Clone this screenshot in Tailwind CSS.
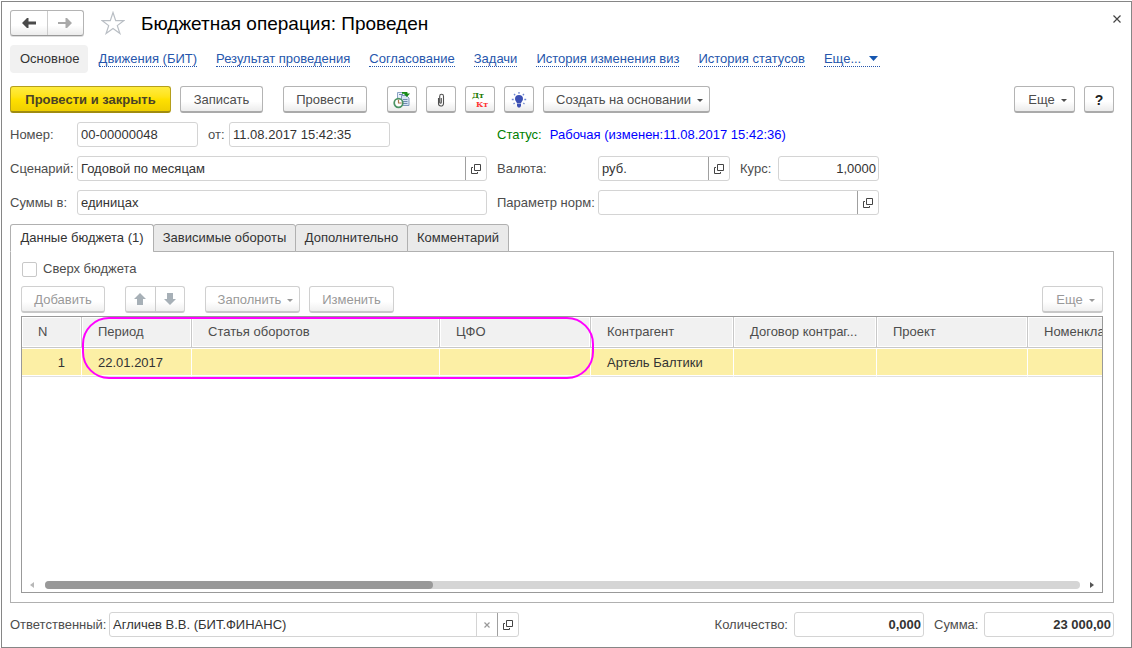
<!DOCTYPE html>
<html lang="ru">
<head>
<meta charset="utf-8">
<title>Бюджетная операция: Проведен</title>
<script src="https://cdn.jsdelivr.net/npm/@tailwindcss/browser@4"></script>
</head>
<body class="h-screen min-h-[480px] overflow-hidden bg-white pt-px pl-px font-['Liberation_Sans',Arial,sans-serif] text-[13px] leading-4 text-[#4d4d4d]">
<svg class="hidden">
  <symbol id="open" viewBox="0 0 10 10"><path d="M3.5 .5h6v6h-6zM2 3.500H.5v6h6V8" fill="none" stroke="#444"/></symbol>
  <symbol id="caret" viewBox="0 0 6 3"><path d="M0 0h6L3 3z" fill="currentColor"/></symbol>
</svg>
<main class="flex h-full flex-col border border-[#868686] pt-2 pr-[17px] pb-[9px] pl-2">

  <header class="flex h-[26px] items-center">
    <div class="flex h-[26px] w-[74px] rounded-[3px] border border-[#b4b4b4] border-b-[#999] bg-linear-to-b from-white from-60% to-[#ececec] shadow-[0_1px_0_#ddd]">
      <button class="flex flex-1 items-center justify-center border-r border-[#ccc]" aria-label="Назад">
        <svg class="h-[10px] w-[14px]" viewBox="0 0 14 10"><path d="M0 5l5-5h1.500v3.500H14v3H6.500V10H5z" fill="#4a4a4a"/></svg>
      </button>
      <button class="flex flex-1 items-center justify-center" aria-label="Вперед">
        <svg class="h-[10px] w-[14px]" viewBox="0 0 14 10"><path d="M14 5L9 0H7.500v4H0v2h7.500v4H9z" fill="#a9a9a9"/></svg>
      </button>
    </div>
    <button class="ml-[17px]" aria-label="В избранное">
      <svg class="block h-6 w-6" viewBox="0 0 24 24"><path d="M12 1.500l2.700 8.100h8.300l-6.700 5 2.600 7.900-6.900-4.900-6.900 4.900 2.600-7.900-6.700-5h8.300z" fill="none" stroke="#b9bec4" stroke-width="1.200"/></svg>
    </button>
    <h1 class="ml-4 pt-[2px] text-[19px] leading-6 text-black">Бюджетная операция: Проведен</h1>
    <button class="-mr-[11px] mb-2 ml-auto p-1" aria-label="Закрыть">
      <svg class="block h-2 w-2" viewBox="0 0 8 8"><path d="M.5 .5l7 7M7.500 .5l-7 7" stroke="#444" stroke-width="1.200"/></svg>
    </button>
  </header>

  <nav class="mt-[9px] flex h-7 items-center gap-[19px] whitespace-nowrap leading-[14px] text-[#2656ac]">
    <a href="#" class="-mr-2 flex h-7 items-center rounded-[4px] bg-[#f1f1f1] pr-2 pl-[10px] text-[#333]">Основное</a>
    <a href="#" class="border-b border-dotted border-[#2656ac]">Движения (БИТ)</a>
    <a href="#" class="border-b border-dotted border-[#2656ac]">Результат проведения</a>
    <a href="#" class="border-b border-dotted border-[#2656ac]">Согласование</a>
    <a href="#" class="border-b border-dotted border-[#2656ac]">Задачи</a>
    <a href="#" class="border-b border-dotted border-[#2656ac]">История изменения виз</a>
    <a href="#" class="border-b border-dotted border-[#2656ac]">История статусов</a>
    <a href="#" class="flex items-center gap-2 border-b border-dotted border-[#2656ac] pr-[2px]">Еще... <svg class="h-[5px] w-[9px]" viewBox="0 0 9 5"><path d="M0 0h9L4.500 5z" fill="#1556b0"/></svg></a>
  </nav>

  <div class="mt-[13px] flex h-[27px] shrink-0 gap-[9px] whitespace-nowrap [&>button]:pt-[2px]">
    <button class="w-[161px] rounded-[3px] border border-b-2 border-[#b59f1c] border-b-[#a08c10] bg-linear-to-b from-[#ffec3d] via-[#ffe100] to-[#efcf00] font-bold text-[#4a4228]">Провести и закрыть</button>
    <button class="mr-[11px] w-[83px] rounded-[3px] border border-b-2 border-[#b4b4b4] border-b-[#aaa] bg-linear-to-b from-white from-60% to-[#ececec]">Записать</button>
    <button class="mr-[11px] w-[84px] rounded-[3px] border border-b-2 border-[#b4b4b4] border-b-[#aaa] bg-linear-to-b from-white from-60% to-[#ececec]">Провести</button>
    <button class="flex w-[30px] items-center justify-center rounded-[3px] border border-b-2 border-[#b4b4b4] border-b-[#aaa] bg-linear-to-b from-white from-60% to-[#ececec]" aria-label="Отчет">
      <svg class="h-[18px] w-[18px] shrink-0" viewBox="0 0 18 18"><path d="M4.500 1.500h8v9h-8z" fill="#e8f0fa" stroke="#8ba3c4"/><path d="M8.500 4.500h5l2.500 2.500v7.500H8.500z" fill="#d6e3f3" stroke="#7f98bb"/><path d="M6 3.500h4M10 8.500h4.500M10 10.500h4.500M10 12.500h4.500" stroke="#6f8ab2"/><path d="M9 1.800h4.500V3" fill="none" stroke="#168a16" stroke-width="1.800"/><path d="M10.500 2.500h6.500L13.800 6z" fill="#168a16"/><circle cx="5.500" cy="12" r="4.300" fill="#fff" stroke="#4c9464" stroke-width="1.700"/><path d="M5.500 8.800V12h3.200" fill="none" stroke="#a8744a" stroke-width="1.200"/></svg>
    </button>
    <button class="flex w-[30px] items-center justify-center rounded-[3px] border border-b-2 border-[#b4b4b4] border-b-[#aaa] bg-linear-to-b from-white from-60% to-[#ececec]" aria-label="Вложения">
      <svg class="h-[14px] w-2 shrink-0" viewBox="0 0 8 14"><path d="M4.300 5v4.500M1.500 5v5.500a2.400 2.400 0 0 0 5 0V3.200a1.900 1.900 0 0 0-3.800 0V9.500a.9 .9 0 0 0 1.700 0" fill="none" stroke="#505050" stroke-width="1.100"/></svg>
    </button>
    <button class="flex w-[30px] flex-col items-start justify-center rounded-[3px] border border-b-2 border-[#b4b4b4] border-b-[#aaa] bg-linear-to-b from-white from-60% to-[#ececec] pl-[6px] font-['DejaVu_Serif',serif] text-[8px] leading-[9px] font-bold" aria-label="Дт Кт">
      <span class="text-[#1c7a00]">Дт</span><span class="pl-1 text-[#f33]">Кт</span>
    </button>
    <button class="flex w-[30px] items-center justify-center rounded-[3px] border border-b-2 border-[#b4b4b4] border-b-[#aaa] bg-linear-to-b from-white from-60% to-[#ececec]" aria-label="Подсказка">
      <svg class="h-4 w-4 shrink-0" viewBox="0 0 16 16"><path d="M8 3a4 4 0 0 0-4 4c0 1.800 1.700 2.500 2 4.500h4c.300-2 2-2.700 2-4.500a4 4 0 0 0-4-4zM6 12h4v2l-1 1.500H7L6 14z" fill="#3c50b4"/><path d="M8 0v1.700M3 2l1.200 1.200M13 2l-1.200 1.200M.8 7.500h1.900M13.300 7.500h1.900M2.500 12l1.200-1M13.500 12l-1.200-1" stroke="#6f86cf" stroke-width="1.300"/></svg>
    </button>
    <button class="flex w-[167px] items-center justify-center gap-[6px] rounded-[3px] border border-b-2 border-[#b4b4b4] border-b-[#aaa] bg-linear-to-b from-white from-60% to-[#ececec] pl-[6px]">Создать на основании <svg class="h-[3px] w-[6px] shrink-0"><use href="#caret"/></svg></button>
    <button class="ml-auto flex w-[61px] items-center justify-center gap-[6px] rounded-[3px] border border-b-2 border-[#b4b4b4] border-b-[#aaa] bg-linear-to-b from-white from-60% to-[#ececec] pl-[6px]">Еще <svg class="h-[3px] w-[6px] shrink-0"><use href="#caret"/></svg></button>
    <button class="w-[30px] rounded-[3px] border border-b-2 border-[#b4b4b4] border-b-[#aaa] bg-linear-to-b from-white from-60% to-[#ececec] text-sm font-bold text-[#222]">?</button>
  </div>

  <form class="mt-[9px] grid shrink-0 grid-cols-[67px_410px_111px_281px] items-center gap-y-[9px] whitespace-nowrap">
    <label for="num">Номер:</label>
    <div class="flex items-center">
      <input id="num" value="00-00000048" class="h-[25px] w-[121px] rounded-[3px] border border-[#d4d4d4] px-[3px] text-[#333]">
      <label for="date" class="w-[31px] pl-[10px]">от:</label>
      <input id="date" value="11.08.2017 15:42:35" class="h-[25px] w-[161px] rounded-[3px] border border-[#d4d4d4] px-[3px] text-[#333]">
    </div>
    <div class="col-span-2 flex gap-2 pl-[10px]"><span class="text-[#008000]">Статус:</span><span class="text-[#00f]">Рабочая (изменен:11.08.2017 15:42:36)</span></div>

    <label for="scen">Сценарий:</label>
    <div class="flex h-[25px] rounded-[3px] border border-[#d4d4d4]">
      <input id="scen" value="Годовой по месяцам" class="min-w-0 flex-1 px-[3px] text-[#333]">
      <button type="button" class="flex w-[21px] items-center justify-center border-l border-[#a0a0a0]" aria-label="Открыть сценарий"><svg class="h-[10px] w-[10px]"><use href="#open"/></svg></button>
    </div>
    <label for="cur" class="pl-[10px]">Валюта:</label>
    <div class="flex items-center">
      <div class="flex h-[25px] w-[132px] rounded-[3px] border border-[#d4d4d4]">
        <input id="cur" value="руб." class="min-w-0 flex-1 px-[3px] text-[#333]">
        <button type="button" class="flex w-[21px] items-center justify-center border-l border-[#a0a0a0]" aria-label="Открыть валюту"><svg class="h-[10px] w-[10px]"><use href="#open"/></svg></button>
      </div>
      <label for="rate" class="w-12 pl-[10px]">Курс:</label>
      <input id="rate" value="1,0000" class="h-[25px] min-w-0 flex-1 rounded-[3px] border border-[#d4d4d4] px-[2px] text-right text-[#333]">
    </div>

    <label for="unit">Суммы в:</label>
    <input id="unit" value="единицах" class="h-[25px] rounded-[3px] border border-[#d4d4d4] px-[3px] text-[#333]">
    <label for="par" class="pl-[10px]">Параметр норм:</label>
    <div class="flex h-[25px] rounded-[3px] border border-[#d4d4d4]">
      <input id="par" class="min-w-0 flex-1 px-[3px] text-[#333]">
      <button type="button" class="flex w-[21px] items-center justify-center border-l border-[#a0a0a0]" aria-label="Открыть параметр"><svg class="h-[10px] w-[10px]"><use href="#open"/></svg></button>
    </div>
  </form>

  <div role="tablist" class="z-10 mt-[9px] -mb-px flex h-7 shrink-0 whitespace-nowrap text-[#333]">
    <button role="tab" aria-selected="true" class="w-[144px] rounded-t-[3px] border border-[#b0b0b0] border-b-white bg-white">Данные бюджета (1)</button>
    <button role="tab" class="-ml-px w-[143px] rounded-t-[3px] border border-[#b0b0b0] bg-[#eaeaea]">Зависимые обороты</button>
    <button role="tab" class="-ml-px w-[113px] rounded-t-[3px] border border-[#b0b0b0] bg-[#eaeaea]">Дополнительно</button>
    <button role="tab" class="-ml-px w-[102px] rounded-t-[3px] border border-[#b0b0b0] bg-[#eaeaea]">Комментарий</button>
  </div>

  <section class="flex min-h-0 flex-1 flex-col border border-[#b0b0b0] px-[10px] pt-[9px] pb-[9px]">
    <label class="flex h-4 items-center gap-[6px]"><input type="checkbox" class="ml-px h-[15px] w-[15px] appearance-none rounded-[2px] border border-[#c8c8c8] bg-white">Сверх бюджета</label>
    <div class="mt-[9px] flex h-[27px] shrink-0 whitespace-nowrap text-[#999] [&>button]:pt-[2px]">
      <button class="w-[84px] rounded-[3px] border border-b-2 border-[#d0d0d0] border-b-[#c8c8c8] bg-linear-to-b from-white from-60% to-[#f0f0f0]">Добавить</button>
      <div class="ml-5 flex w-[60px] rounded-[3px] border border-b-2 border-[#d0d0d0] border-b-[#c8c8c8] bg-linear-to-b from-white from-60% to-[#f0f0f0]">
        <button class="flex flex-1 items-center justify-center border-r border-[#ccc]" aria-label="Вверх"><svg class="h-3 w-3" viewBox="0 0 12 12"><path d="M6 0l6 6H9v6H3V6H0z" fill="#a7b0b7"/></svg></button>
        <button class="flex flex-1 items-center justify-center" aria-label="Вниз"><svg class="h-3 w-3" viewBox="0 0 12 12"><path d="M6 12L0 6h3V0h6v6h3z" fill="#a7b0b7"/></svg></button>
      </div>
      <button class="ml-5 flex w-[95px] items-center justify-center gap-[6px] rounded-[3px] border border-b-2 border-[#d0d0d0] border-b-[#c8c8c8] bg-linear-to-b from-white from-60% to-[#f0f0f0] pl-[6px]">Заполнить <svg class="h-[3px] w-[6px] shrink-0"><use href="#caret"/></svg></button>
      <button class="ml-[9px] w-[85px] rounded-[3px] border border-b-2 border-[#d0d0d0] border-b-[#c8c8c8] bg-linear-to-b from-white from-60% to-[#f0f0f0]">Изменить</button>
      <button class="ml-auto flex w-[61px] items-center justify-center gap-[6px] rounded-[3px] border border-b-2 border-[#d0d0d0] border-b-[#c8c8c8] bg-linear-to-b from-white from-60% to-[#f0f0f0] pl-[6px]">Еще <svg class="h-[3px] w-[6px] shrink-0"><use href="#caret"/></svg></button>
    </div>

    <div class="relative mt-[3px] flex min-h-0 flex-1 flex-col border border-[#999]">
      <div class="min-h-0 flex-1 overflow-hidden">
        <table class="w-[1130px] table-fixed border-separate border-spacing-0 text-left whitespace-nowrap">
          <colgroup><col class="w-[60px]"><col class="w-[110px]"><col class="w-[248px]"><col class="w-[151px]"><col class="w-[143px]"><col class="w-[143px]"><col class="w-[151px]"><col></colgroup>
          <thead>
            <tr class="h-[31px] [&>th]:border-r [&>th]:border-b [&>th]:border-[#c8c8c8] [&>th]:bg-[#f1f1f1] [&>th]:px-4 [&>th]:font-normal [&>th]:shadow-[inset_0_0_0_1px_white]">
              <th>N</th><th>Период</th><th>Статья оборотов</th><th>ЦФО</th><th>Контрагент</th><th>Договор контраг...</th><th>Проект</th><th>Номенклатура</th>
            </tr>
          </thead>
          <tbody>
            <tr class="h-[29px] text-[#333] [&>td]:border-r [&>td]:border-b [&>td]:border-r-white [&>td]:border-b-[#e0e0e0] [&>td]:bg-[#fcefa5] [&>td]:px-4 [&>td]:pt-[2px] [&>td]:shadow-[inset_0_1px_white,inset_0_-1px_white]">
              <td class="text-right">1</td><td>22.01.2017</td><td></td><td></td><td>Артель Балтики</td><td></td><td></td><td></td>
            </tr>
          </tbody>
        </table>
      </div>
      <div class="flex h-[15px] shrink-0 items-center pr-2 pl-2">
        <svg class="mr-[11px] h-[6px] w-1" viewBox="0 0 4 6"><path d="M4 0v6L0 3z" fill="#b8b8b8"/></svg>
        <div class="h-2 flex-1 rounded-full bg-[#d5d5d5]"><div class="h-2 rounded-full bg-[#999]" style="width:37.500%"></div></div>
        <svg class="ml-[10px] h-[6px] w-1" viewBox="0 0 4 6"><path d="M0 0v6L4 3z" fill="#555"/></svg>
      </div>
      <div class="pointer-events-none absolute top-0 left-[60px] h-[62px] w-[512px] rounded-[27px] border-2 border-[#f0f]"></div>
    </div>
  </section>

  <footer class="mt-[9px] mb-px flex h-[25px] shrink-0 items-center whitespace-nowrap">
    <label for="resp" class="w-[99px]">Ответственный:</label>
    <div class="flex h-[25px] w-[410px] rounded-[3px] border border-[#d4d4d4]">
      <input id="resp" value="Агличев В.В. (БИТ.ФИНАНС)" class="min-w-0 flex-1 px-[3px] text-[#333]">
      <button class="flex w-[21px] items-center justify-center border-l border-[#d4d4d4]" aria-label="Очистить"><svg class="h-[6px] w-[6px]" viewBox="0 0 6 6"><path d="M.5 .5l5 5M5.500 .5l-5 5" stroke="#999" stroke-width="1.200"/></svg></button>
      <button class="flex w-[21px] items-center justify-center border-l border-[#a0a0a0]" aria-label="Открыть ответственного"><svg class="h-[10px] w-[10px]"><use href="#open"/></svg></button>
    </div>
    <label for="qty" class="mr-[6px] ml-auto">Количество:</label>
    <input id="qty" value="0,000" class="h-[25px] w-[130px] rounded-[3px] border border-[#d4d4d4] px-[2px] text-right font-bold text-[#333]">
    <label for="sum" class="w-[60px] pl-[10px]">Сумма:</label>
    <input id="sum" value="23 000,00" class="h-[25px] w-[130px] rounded-[3px] border border-[#d4d4d4] px-[2px] text-right font-bold text-[#333]">
  </footer>
</main>
</body>
</html>
